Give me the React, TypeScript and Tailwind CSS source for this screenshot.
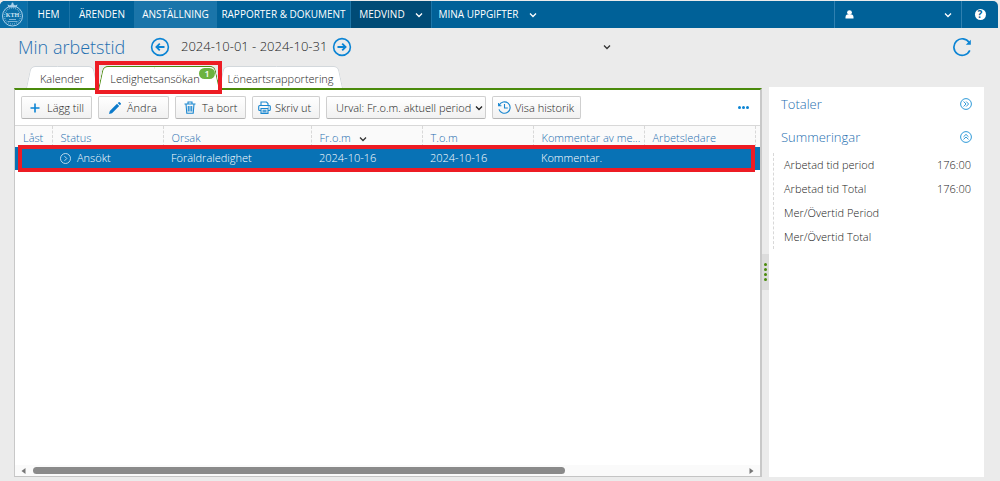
import React from "react";

type NavItem = {
  label: string;
  className: string;
  hasMenu?: boolean;
};

const navItems: NavItem[] = [
  { label: "HEM", className: "w-[42px]" },
  { label: "ÄRENDEN", className: "w-[65px]" },
  { label: "ANSTÄLLNING", className: "w-[82px] bg-[#1a75aa]" },
  { label: "RAPPORTER & DOKUMENT", className: "w-[134px]" },
  { label: "MEDVIND", className: "w-[81px] bg-[#004b76]", hasMenu: true },
  { label: "MINA UPPGIFTER", className: "w-[112px]", hasMenu: true },
];

const columns = [
  { title: "Låst", width: "w-[37px]" },
  { title: "Status", width: "w-[111px]" },
  { title: "Orsak", width: "w-[148px]" },
  { title: "Fr.o.m", width: "w-[111px]", sorted: true },
  { title: "T.o.m", width: "w-[111px]" },
  { title: "Kommentar av me...", width: "w-[111px]" },
  { title: "Arbetsledare", width: "w-[111px]" },
];

const totals = [
  { label: "Arbetad tid period", value: "176:00" },
  { label: "Arbetad tid Total", value: "176:00" },
  { label: "Mer/Övertid Period", value: "" },
  { label: "Mer/Övertid Total", value: "" },
];

type IconProps = { className?: string };

const Chevron = ({ className = "" }: IconProps) => (
  <svg viewBox="0 0 8 8" className={`h-2 w-2 shrink-0 ${className}`} fill="none" stroke="currentColor" strokeWidth="1.3">
    <path d="M1 2.5 4 5.5 7 2.5" />
  </svg>
);

const CircleArrow = ({ className = "" }: IconProps) => (
  <svg viewBox="0 0 20 20" className={`h-5 w-5 ${className}`} fill="none" stroke="#0b84d4" strokeWidth="1.6">
    <circle cx="10" cy="10" r="8.4" />
    <path d="M5.5 10h8M10.2 6.6l3.4 3.4-3.4 3.4" strokeWidth="1.8" />
  </svg>
);

const Crest = () => (
  <svg viewBox="0 0 27 27" className="h-[27px] w-[27px]" fill="none" stroke="#a9d0ea">
    <circle cx="12.5" cy="15" r="10" strokeWidth="1" />
    <circle cx="12.5" cy="15" r="8" strokeWidth="1.4" strokeDasharray="1 1" opacity="0.6" />
    <path d="M8.5 6.5 7.5 3.5l2.5 1 2.5-2 2.5 2 2.5-1-1 3z" fill="#a9d0ea" stroke="none" />
    <circle cx="12.5" cy="2.4" r="1" fill="#a9d0ea" stroke="none" />
    <path d="M9 18.5h7M8 20.5h9" strokeWidth="1" opacity="0.7" />
    <text x="12.5" y="16" textAnchor="middle" fontFamily="Liberation Serif, serif" fontSize="6" fontWeight="700" fill="#cfe6f5" stroke="none">
      KTH
    </text>
  </svg>
);

const PlusIcon = () => (
  <svg viewBox="0 0 12 12" className="h-3 w-3 shrink-0" stroke="#0b84d4" strokeWidth="1.6">
    <path d="M6 1.5v9M1.5 6h9" />
  </svg>
);

const PencilIcon = () => (
  <svg viewBox="0 0 12 12" className="h-3 w-3 shrink-0" fill="#0b7acb">
    <path d="M0 12 .8 9 8 1.8l2.2 2.2L3 11.2zM8.7 1.1 9.7.2q.5-.4 1 0l1.1 1.1q.4.5 0 1l-.9 1z" />
  </svg>
);

const TrashIcon = () => (
  <svg viewBox="0 0 12 13" className="h-[13px] w-3 shrink-0" fill="none" stroke="#1a87d0" strokeWidth="1.1">
    <path d="M.5 3h11M4 2.8V1h4v1.8M2 3l.8 9.3h6.4L10 3M4.3 5v5.5M6 5v5.5M7.7 5v5.5" />
  </svg>
);

const PrinterIcon = () => (
  <svg viewBox="0 0 13 13" className="h-[13px] w-[13px] shrink-0" fill="none" stroke="#1a87d0" strokeWidth="1.1">
    <path d="M3 4.5V1h5.5L10 2.5v2M3 9.500H1.700Q.7 9.500.7 8.500v-3q0-1 1-1h9.600q1 0 1 1v3q0 1-1 1H10" />
    <path d="M3 7.500h7v4.900H3zM4.500 9.200h4M4.500 10.800h4M9.800 6h1" />
  </svg>
);

const HistoryIcon = () => (
  <svg viewBox="0 0 13 13" className="h-[13px] w-[13px] shrink-0" fill="none" stroke="#1a87d0" strokeWidth="1.1">
    <path d="M1.2 4.3A5.7 5.7 0 1 1 1 8.300M.6 2v2.800h2.800M6.500 3v4h3.300" />
  </svg>
);

const DoubleChevronCircle = ({ className = "" }: IconProps) => (
  <svg viewBox="0 0 12 12" className={`h-3 w-3 ${className}`} fill="none" stroke="#2f9ad8" strokeWidth="1">
    <circle cx="6" cy="6" r="5.4" />
    <path d="M3.6 3.5 6 6 3.6 8.5M6.2 3.5 8.6 6 6.2 8.5" />
  </svg>
);

const ToolButton: React.FC<{ className: string; children: React.ReactNode }> = ({ className, children }) => (
  <button
    type="button"
    className={`flex h-[23px] items-center rounded-[2px] border border-[#cfcfcf] border-b-[#b4b4b4] bg-gradient-to-b from-white to-[#f1f1f1] text-[11px] leading-4 whitespace-nowrap ${className}`}
  >
    {children}
  </button>
);

const Tab: React.FC<{ label: string; active?: boolean; className: string; badge?: number }> = ({
  label,
  active = false,
  className,
  badge,
}) => {
  const edge = active ? "before:border-[#4a8a0c] after:border-[#4a8a0c]" : "before:border-[#d3d8dc] after:border-[#d3d8dc]";
  const stack = active ? "z-10 h-6" : "h-[22px]";
  return (
    <button
      type="button"
      role="tab"
      aria-selected={active}
      className={`relative isolate flex justify-center text-[11px] leading-4 before:absolute before:inset-y-0 before:left-0 before:-z-10 before:w-1/2 before:origin-bottom-left before:-skew-x-12 before:rounded-tl-[5px] before:border-t before:border-l before:bg-white after:absolute after:inset-y-0 after:right-0 after:-z-10 after:w-1/2 after:origin-bottom-right after:skew-x-12 after:rounded-tr-[5px] after:border-t after:border-r after:bg-white ${edge} ${stack} ${className}`}
    >
      <span className="pt-[5px]">{label}</span>
      {badge !== undefined && (
        <span className="absolute top-[2px] right-1 h-[11px] w-4 rounded-full bg-[#6cb33f] text-center text-[9px] leading-[11px] font-semibold text-white">
          {badge}
        </span>
      )}
      {active && <span className="absolute -inset-x-[3px] -top-[5px] -bottom-1 border-4 border-[#ed1c24]" />}
    </button>
  );
};

const TopBar = () => (
  <header className="mt-px flex h-[27px] overflow-hidden rounded-t-[5px] bg-[#006198] text-[10px] text-white">
    <a href="#" aria-label="KTH" className="w-[27px] shrink-0 bg-[#0a6fa8]">
      <Crest />
    </a>
    <nav className="flex">
      {navItems.map((item) => (
        <a
          key={item.label}
          href="#"
          className={`flex items-center justify-center gap-[10px] border-l border-[#1c75a8] whitespace-nowrap ${item.className}`}
        >
          {item.label}
          {item.hasMenu && <Chevron />}
        </a>
      ))}
    </nav>
    <button type="button" aria-label="Användare" className="ml-auto flex w-[127px] items-center justify-between border-l border-[#2f80b0] pr-[9px] pl-[10px]">
      <svg viewBox="0 0 9 9" className="h-[9px] w-[9px]" fill="currentColor">
        <circle cx="4.5" cy="2.6" r="2.4" />
        <path d="M2 4.500h5q1.500.5 1.500 2.500v1.500h-8V7q0-2 1.500-2.500z" />
      </svg>
      <Chevron />
    </button>
    <button type="button" aria-label="Hjälp" className="flex w-[37px] items-center justify-center border-l border-[#2f80b0]">
      <span className="h-[11px] w-[11px] rounded-full bg-white text-center text-[10px] leading-[11px] font-bold text-[#006198]">?</span>
    </button>
  </header>
);

const PeriodBar = () => (
  <div className="flex h-[38px] items-center pr-[26px] pl-[18px]">
    <h1 className="w-[132px] shrink-0 text-[18px] font-light whitespace-nowrap text-[#1f6fb0]">Min arbetstid</h1>
    <button type="button" aria-label="Föregående period">
      <CircleArrow className="rotate-180" />
    </button>
    <span className="w-[162px] shrink-0 pl-[11px] text-[13px] font-light whitespace-nowrap text-[#222]">
      2024-10-01 - 2024-10-31
    </span>
    <button type="button" aria-label="Nästa period">
      <CircleArrow />
    </button>
    <button type="button" aria-label="Välj anställning" className="ml-[251px] text-[#333]">
      <Chevron />
    </button>
    <button type="button" aria-label="Uppdatera" className="ml-auto">
      <svg viewBox="0 0 20 20" className="h-5 w-5" fill="none" stroke="#0b84d4" strokeWidth="1.7">
        <path d="M17.8 13.4A8.3 8.3 0 1 1 17.2 5.6" />
        <path d="M18.8 2.8v5h-5z" fill="#0b84d4" stroke="none" />
      </svg>
    </button>
  </div>
);

const Toolbar = () => (
  <div className="flex h-[35px] items-center gap-[6px] pr-[11px] pl-[6px]">
    <ToolButton className="w-[71px] gap-[6px] pl-[7px]">
      <PlusIcon />
      Lägg till
    </ToolButton>
    <ToolButton className="w-[71px] gap-[6px] pl-[10px]">
      <PencilIcon />
      Ändra
    </ToolButton>
    <ToolButton className="w-[71px] gap-[6px] pl-2">
      <TrashIcon />
      Ta bort
    </ToolButton>
    <ToolButton className="w-[68px] gap-1 pl-[5px]">
      <PrinterIcon />
      Skriv ut
    </ToolButton>
    <ToolButton className="w-[160px] gap-1 pl-[9px]">
      Urval: Fr.o.m. aktuell period
      <Chevron />
    </ToolButton>
    <ToolButton className="w-[89px] gap-1 pl-[5px]">
      <HistoryIcon />
      Visa historik
    </ToolButton>
    <button type="button" aria-label="Mer" className="ml-auto flex gap-px">
      <span className="h-[3px] w-[3px] rounded-full bg-[#0b84d4]" />
      <span className="h-[3px] w-[3px] rounded-full bg-[#0b84d4]" />
      <span className="h-[3px] w-[3px] rounded-full bg-[#0b84d4]" />
    </button>
  </div>
);

const LeaveTable = () => (
  <div className="relative">
    <table className="w-full table-fixed border-collapse text-left text-[11px] leading-4">
      <thead>
        <tr className="h-[21px] border-t border-[#d8d8d8] bg-[#fafafa] text-[#1f6fb0]">
          {columns.map((col) => (
            <th
              key={col.title}
              className={`border-r border-dashed border-[#d8d8d8] pt-1 pl-2 font-light whitespace-nowrap ${col.width}`}
            >
              {col.title}
              {col.sorted && <Chevron className="ml-2 inline text-[#333]" />}
            </th>
          ))}
          <th />
        </tr>
      </thead>
      <tbody>
        <tr className="h-[23px] bg-[#0872b5] font-light text-white">
          <td />
          <td className="pl-2">
            <span className="flex items-center gap-[6px]">
              <svg viewBox="0 0 11 11" className="h-[11px] w-[11px]" fill="none" stroke="#cfe3f1" strokeWidth="0.9">
                <circle cx="5.5" cy="5.5" r="5" />
                <path d="M4.5 3.2 6.8 5.5 4.5 7.8" />
              </svg>
              Ansökt
            </span>
          </td>
          <td className="pl-2">Föräldraledighet</td>
          <td className="pl-2">2024-10-16</td>
          <td className="pl-2">2024-10-16</td>
          <td className="pl-2">Kommentar.</td>
          <td />
          <td />
        </tr>
      </tbody>
    </table>
    <div className="pointer-events-none absolute right-[5px] -bottom-[2px] left-[3px] h-[27px] border-4 border-[#ed1c24]" />
  </div>
);

const ScrollBar = () => (
  <div className="mt-auto flex h-[11px] items-center gap-[7px] bg-[#fafafa] px-[6px]">
    <svg viewBox="0 0 5 6" className="h-[6px] w-[5px]" fill="#777">
      <path d="M4.5 0v6L.5 3z" />
    </svg>
    <div className="flex-1">
      <div className="h-[7px] w-3/4 rounded-full bg-[#8a8a8a]" />
    </div>
    <svg viewBox="0 0 5 6" className="h-[6px] w-[5px]" fill="#777">
      <path d="M.5 0v6l4-3z" />
    </svg>
  </div>
);

const Summary = () => (
  <aside className="w-[215px] shrink-0 bg-white pt-[7px] text-[11px] leading-4 text-[#222]">
    <div className="flex items-center justify-between px-3">
      <h2 className="text-[13px] leading-5 font-light text-[#1f6fb0]">Totaler</h2>
      <button type="button" aria-label="Visa totaler">
        <DoubleChevronCircle />
      </button>
    </div>
    <div className="mt-[13px] flex items-center justify-between px-3">
      <h2 className="text-[13px] leading-5 font-light text-[#1f6fb0]">Summeringar</h2>
      <button type="button" aria-label="Dölj summeringar">
        <DoubleChevronCircle className="-rotate-90" />
      </button>
    </div>
    <dl className="mt-[6px] ml-1 border-l border-dashed border-[#d8d8d8] pr-[13px] pl-[10px]">
      {totals.map((row) => (
        <div key={row.label} className="flex h-6 items-center justify-between font-light">
          <dt>{row.label}</dt>
          <dd>{row.value}</dd>
        </div>
      ))}
    </dl>
  </aside>
);

export default function App() {
  return (
    <div className="flex min-h-screen flex-col bg-[#ebebeb] pr-[2px] font-['Open_Sans',sans-serif]">
      <TopBar />
      <PeriodBar />
      <div className="flex flex-1 pr-[14px] pb-1">
        <main className="flex min-w-0 flex-1 flex-col pl-[14px]">
          <div role="tablist" className="flex h-[22px] items-start pl-3 font-light text-[#222]">
            <Tab label="Kalender" className="w-[72px]" />
            <Tab label="Ledighetsansökan" active badge={1} className="w-[121px] pr-[7px]" />
            <Tab label="Löneartsrapportering" className="w-[123px]" />
          </div>
          <section className="flex flex-1 flex-col border-t-2 border-r-2 border-b border-l border-t-[#4a8a0c] border-r-[#c8c8c8] border-b-[#c4c4c4] border-l-[#c8c8c8] bg-white font-light text-[#222]">
            <Toolbar />
            <LeaveTable />
            <ScrollBar />
          </section>
        </main>
        <div className="flex w-[7px] shrink-0 items-center justify-center">
          <div className="flex h-9 w-full flex-col items-center justify-center gap-[2px] bg-[#dcdcdc]">
            <span className="h-[3px] w-[3px] rounded-full bg-[#4a8a0c]" />
            <span className="h-[3px] w-[3px] rounded-full bg-[#4a8a0c]" />
            <span className="h-[3px] w-[3px] rounded-full bg-[#4a8a0c]" />
            <span className="h-[3px] w-[3px] rounded-full bg-[#4a8a0c]" />
          </div>
        </div>
        <div className="flex pt-[21px]">
          <Summary />
        </div>
      </div>
    </div>
  );
}
